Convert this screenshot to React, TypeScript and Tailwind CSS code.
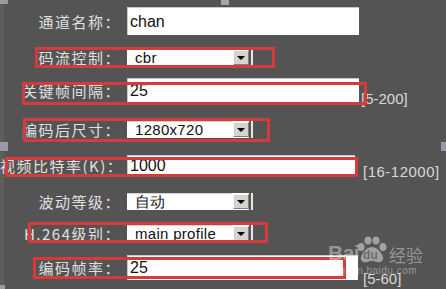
import React from "react";

const labelCls =
    "w-[121px] shrink-0 text-right text-[15px] leading-none tracking-[1.5px] text-[#e0e0e0] whitespace-nowrap";

function TextBox({ value, width, height }: { value: string; width: string; height: string }) {
    return (
        <div className={`${width} ${height} bg-white border-t border-l border-[#c8c8c8] flex items-center pl-[2px] text-[16px] text-[#111] font-['Liberation_Sans',Arial,sans-serif] shrink-0`}>
            {value}
        </div>
    );
}

function Select({ value }: { value: string }) {
    return (
        <div className="flex items-stretch h-full shrink-0">
            <div className="w-[105px] bg-white border-t border-[#d0d0d0] flex items-center pl-[8px] text-[15px] tracking-[0.3px] text-[#111] font-['Liberation_Sans',Arial,sans-serif] whitespace-nowrap overflow-hidden">
                {value}
            </div>
            <div className="w-[17px] bg-white flex items-center justify-center">
                <div className="w-[16px] h-[15px] bg-[#d6d3ce] border border-t-white border-l-white border-r-[#808080] border-b-[#808080] flex items-center justify-center">
                    <svg width="8" height="4" viewBox="0 0 8 4">
                        <path d="M0 0h8L4 4z" fill="#000" />
                    </svg>
                </div>
            </div>
            <div className="w-[2px]" />
            <div className="w-[2px] bg-[#e8e8e8]" />
        </div>
    );
}

function RedBox({ cls }: { cls: string }) {
    return <div className={`absolute border-[3px] border-[#d8393b] z-10 pointer-events-none ${cls}`} />;
}

function Watermark() {
    return (
        <div className="absolute left-[328px] top-[236px] flex flex-col items-start text-white/40 z-20">
            <div className="flex items-end">
                <span className="text-[21px] font-bold leading-none font-['Liberation_Sans',Arial,sans-serif] tracking-tight">Bai</span>
                <div className="relative w-[32px] h-[27px] -ml-[3px]">
                    <svg width="32" height="27" viewBox="0 0 32 27" className="absolute inset-0">
                        <g fill="rgba(255,255,255,0.45)">
                            <ellipse cx="5" cy="11" rx="3.5" ry="4" />
                            <ellipse cx="12" cy="4.5" rx="3.5" ry="4" />
                            <ellipse cx="20" cy="4.5" rx="3.5" ry="4" />
                            <ellipse cx="27" cy="11" rx="3.5" ry="4" />
                            <path d="M16 11c-5 0-10 6-11 10-1 4 3 6 6 5 2-.5 3-1 5-1s3 .5 5 1c3 1 7-1 6-5-1-4-6-10-11-10z" />
                        </g>
                    </svg>
                    <span className="absolute left-[7px] top-[13px] text-[12px] font-bold leading-none text-[#545454]/70 font-['Liberation_Sans',Arial,sans-serif]">du</span>
                </div>
                <span className="text-[17px] leading-none ml-[1px] font-['Noto_Sans_CJK_SC',sans-serif]">经验</span>
            </div>
            <span className="text-[10px] leading-none mt-[3px] tracking-[0.5px] font-['Liberation_Sans',Arial,sans-serif]">jingyan.baidu.com</span>
        </div>
    );
}

export default function App() {
    return (
        <div className="relative w-[446px] h-[289px] overflow-hidden bg-[#545454] font-['Noto_Sans_CJK_SC','Noto_Sans',sans-serif]">
            {/* selection handles from the crop */}
            <div className="absolute left-0 top-0 w-[4px] h-full bg-[#5e5e5e]" />
            <div className="absolute left-0 top-0 w-[8px] h-[4px] bg-[#9a9aa6]" />
            <div className="absolute left-[221px] top-0 w-[8px] h-[5px] bg-[#a4a4b4]" />
            <div className="absolute left-0 top-[142px] w-[8px] h-[9px] bg-[#9a9aa6]" />
            <div className="absolute right-0 top-[142px] w-[5px] h-[9px] bg-[#9a9aa6]" />
            <div className="absolute left-0 bottom-0 w-[5px] h-[4px] bg-[#9a9aa6]" />

            <div className="flex flex-col">
                <div className="relative flex items-center gap-[6px] mt-[7px] h-[28px]">
                    <span className={labelCls}>通道名称：</span>
                    <TextBox value="chan" width="w-[232px]" height="h-[28px]" />
                </div>

                <div className="relative flex items-center gap-[6px] mt-[14px] h-[17px]">
                    <span className={labelCls}>码流控制：</span>
                    <Select value="cbr" />
                    <RedBox cls="left-[35px] -top-[2px] w-[240px] h-[21px]" />
                </div>

                <div className="relative flex items-center gap-[6px] mt-[12px] h-[25px]">
                    <span className={labelCls}>关键帧间隔：</span>
                    <TextBox value="25" width="w-[232px]" height="h-[25px]" />
                    <span className="self-end translate-y-[3px] -ml-[4px] text-[15px] leading-none text-[#d8d8d8] font-['Liberation_Sans',Arial,sans-serif]">[5-200]</span>
                    <RedBox cls="left-[22px] top-[4px] w-[345px] h-[23px]" />
                </div>

                <div className="relative flex items-center gap-[6px] mt-[18px] h-[17px]">
                    <span className={labelCls}>编码后尺寸：</span>
                    <Select value="1280x720" />
                    <RedBox cls="left-[23px] -top-[3px] w-[247px] h-[24px]" />
                </div>

                <div className="relative flex items-center gap-[6px] mt-[17px] h-[20px]">
                    <span className={labelCls}>视频比特率(K)：</span>
                    <TextBox value="1000" width="w-[228px]" height="h-[20px]" />
                    <span className="self-end translate-y-[4px] ml-[2px] text-[15px] leading-none tracking-[0.5px] text-[#d8d8d8] font-['Liberation_Sans',Arial,sans-serif]">[16-12000]</span>
                    <RedBox cls="left-[5px] top-[2px] w-[353px] h-[20px]" />
                </div>

                <div className="relative flex items-center gap-[6px] mt-[18px] h-[17px]">
                    <span className={labelCls}>波动等级：</span>
                    <Select value="自动" />
                </div>

                <div className="relative flex items-center gap-[6px] mt-[15px] h-[17px]">
                    <span className={labelCls}>H.264级别：</span>
                    <Select value="main profile" />
                    <RedBox cls="left-[28px] -top-[3px] w-[240px] h-[21px]" />
                </div>

                <div className="relative flex items-center gap-[6px] mt-[13px] h-[25px]">
                    <span className={labelCls}>编码帧率：</span>
                    <TextBox value="25" width="w-[231px]" height="h-[25px]" />
                    <span className="self-end translate-y-[6px] -ml-[1px] text-[15px] leading-none text-[#d8d8d8] font-['Liberation_Sans',Arial,sans-serif]">[5-60]</span>
                    <RedBox cls="left-[33px] top-[2px] w-[313px] h-[22px]" />
                </div>
            </div>

            <Watermark />
        </div>
    );
}
